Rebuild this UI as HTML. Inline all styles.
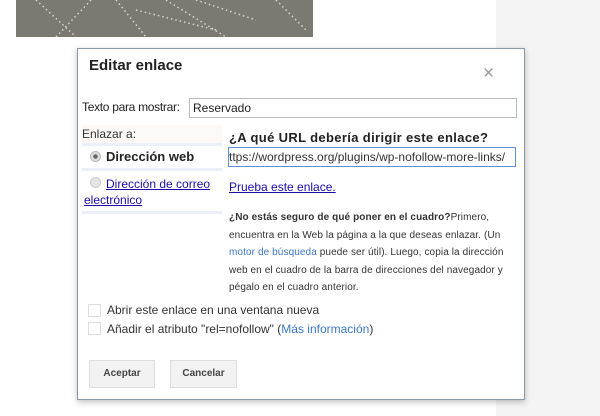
<!DOCTYPE html><html><head><meta charset="utf-8"><style>
body{margin:0;width:600px;height:416px;position:relative;overflow:hidden;background:#fff;font-family:"Liberation Sans",Arial,sans-serif;color:#222}
.a{position:absolute}
</style></head><body>
<div class="a" style="left:496px;top:0;width:104px;height:416px;background:#f4f4f4"></div>
<div class="a" style="left:16px;top:0;width:297px;height:37px;background:#7b7a72;overflow:hidden">
<svg width="297" height="37"><g stroke="#d8d8d0" stroke-width="1.5" stroke-dasharray="1.5 3" fill="none"><path d="M20 0L60 37M40 37L75 0M100 0L130 37M150 0L210 37M180 0L240 20M260 0L290 30M120 10L200 30"/></g></svg></div>
<div class="a" style="left:77px;top:48px;width:446px;height:350px;background:#fff;border:1px solid #8a9aa8;box-shadow:0 2px 6px rgba(0,0,0,.25)"></div>
<div class="a" style="left:89px;top:57px;font-size:15px;font-weight:bold;color:#222">Editar enlace</div>
<div class="a" style="left:483px;top:63px;font-size:19px;color:#999">×</div>
<div class="a" style="left:82px;top:100px;font-size:12px;letter-spacing:-0.3px">Texto para mostrar:</div>
<div class="a" style="left:189px;top:98px;font-size:12px;line-height:18px;padding-left:3px;box-sizing:border-box;width:328px;height:20px;border:1px solid #bbb">Reservado</div>
<div class="a" style="left:82px;top:125px;width:140px;height:18px;background:#fcf9f6"></div>
<div class="a" style="left:82px;top:127px;font-size:12px;color:#333">Enlazar a:</div>
<div class="a" style="left:82px;top:143px;width:140px;height:3px;background:#eceef8"></div>
<div class="a" style="left:82px;top:168px;width:140px;height:3px;background:#eceef8"></div>
<div class="a" style="left:82px;top:211px;width:140px;height:3px;background:#eceef8"></div>
<div class="a" style="left:90px;top:151px;width:9px;height:9px;border-radius:50%;background:radial-gradient(#666 30%,#ddd 40%);border:1px solid #bbb"></div>
<div class="a" style="left:106px;top:149px;font-size:13px;font-weight:bold">Dirección web</div>
<div class="a" style="left:90px;top:177px;width:9px;height:9px;border-radius:50%;background:#e4e4e4;border:1px solid #ccc"></div>
<div class="a" style="left:84px;top:176px;font-size:12px;line-height:16px;color:#1a0dab;text-decoration:underline;width:140px;text-indent:22px">Dirección de correo electrónico</div>
<div class="a" style="left:229px;top:130px;font-size:13px;font-weight:bold;letter-spacing:0.35px">¿A qué URL debería dirigir este enlace?</div>
<div class="a" style="left:228px;top:147px;width:288px;height:20px;border:1px solid #5b8fd6;box-sizing:border-box;font-size:12px;line-height:18px;overflow:hidden;white-space:nowrap;color:#333">ttps://wordpress.org/plugins/wp-nofollow-more-links/</div>
<div class="a" style="left:229px;top:180px;font-size:12px;color:#1a0dab;text-decoration:underline">Prueba este enlace.</div>
<div class="a" style="left:229px;top:209px;font-size:10px;line-height:17.6px;color:#333;letter-spacing:0.1px;white-space:nowrap"><b>¿No estás seguro de qué poner en el cuadro?</b>Primero,<br>encuentra en la Web la página a la que deseas enlazar. (Un<br><span style="color:#3c78c8">motor de búsqueda</span> puede ser útil). Luego, copia la dirección<br>web en el cuadro de la barra de direcciones del navegador y<br>pégalo en el cuadro anterior.</div>
<div class="a" style="left:88px;top:304px;width:11px;height:11px;border:1px solid #ddd"></div>
<div class="a" style="left:107px;top:303px;font-size:12px;color:#333">Abrir este enlace en una ventana nueva</div>
<div class="a" style="left:88px;top:322px;width:11px;height:11px;border:1px solid #ddd"></div>
<div class="a" style="left:107px;top:322px;font-size:12px;color:#333">Añadir el atributo "rel=nofollow" (<span style="color:#3c78c8">Más información</span>)</div>
<div class="a" style="left:89px;top:360px;width:64px;height:26px;background:#f2f2f2;border:1px solid #ddd;font-size:10px;font-weight:bold;color:#444;text-align:center;line-height:26px">Aceptar</div>
<div class="a" style="left:170px;top:360px;width:65px;height:26px;background:#f2f2f2;border:1px solid #ddd;font-size:10px;font-weight:bold;color:#444;text-align:center;line-height:26px">Cancelar</div>
</body></html>
